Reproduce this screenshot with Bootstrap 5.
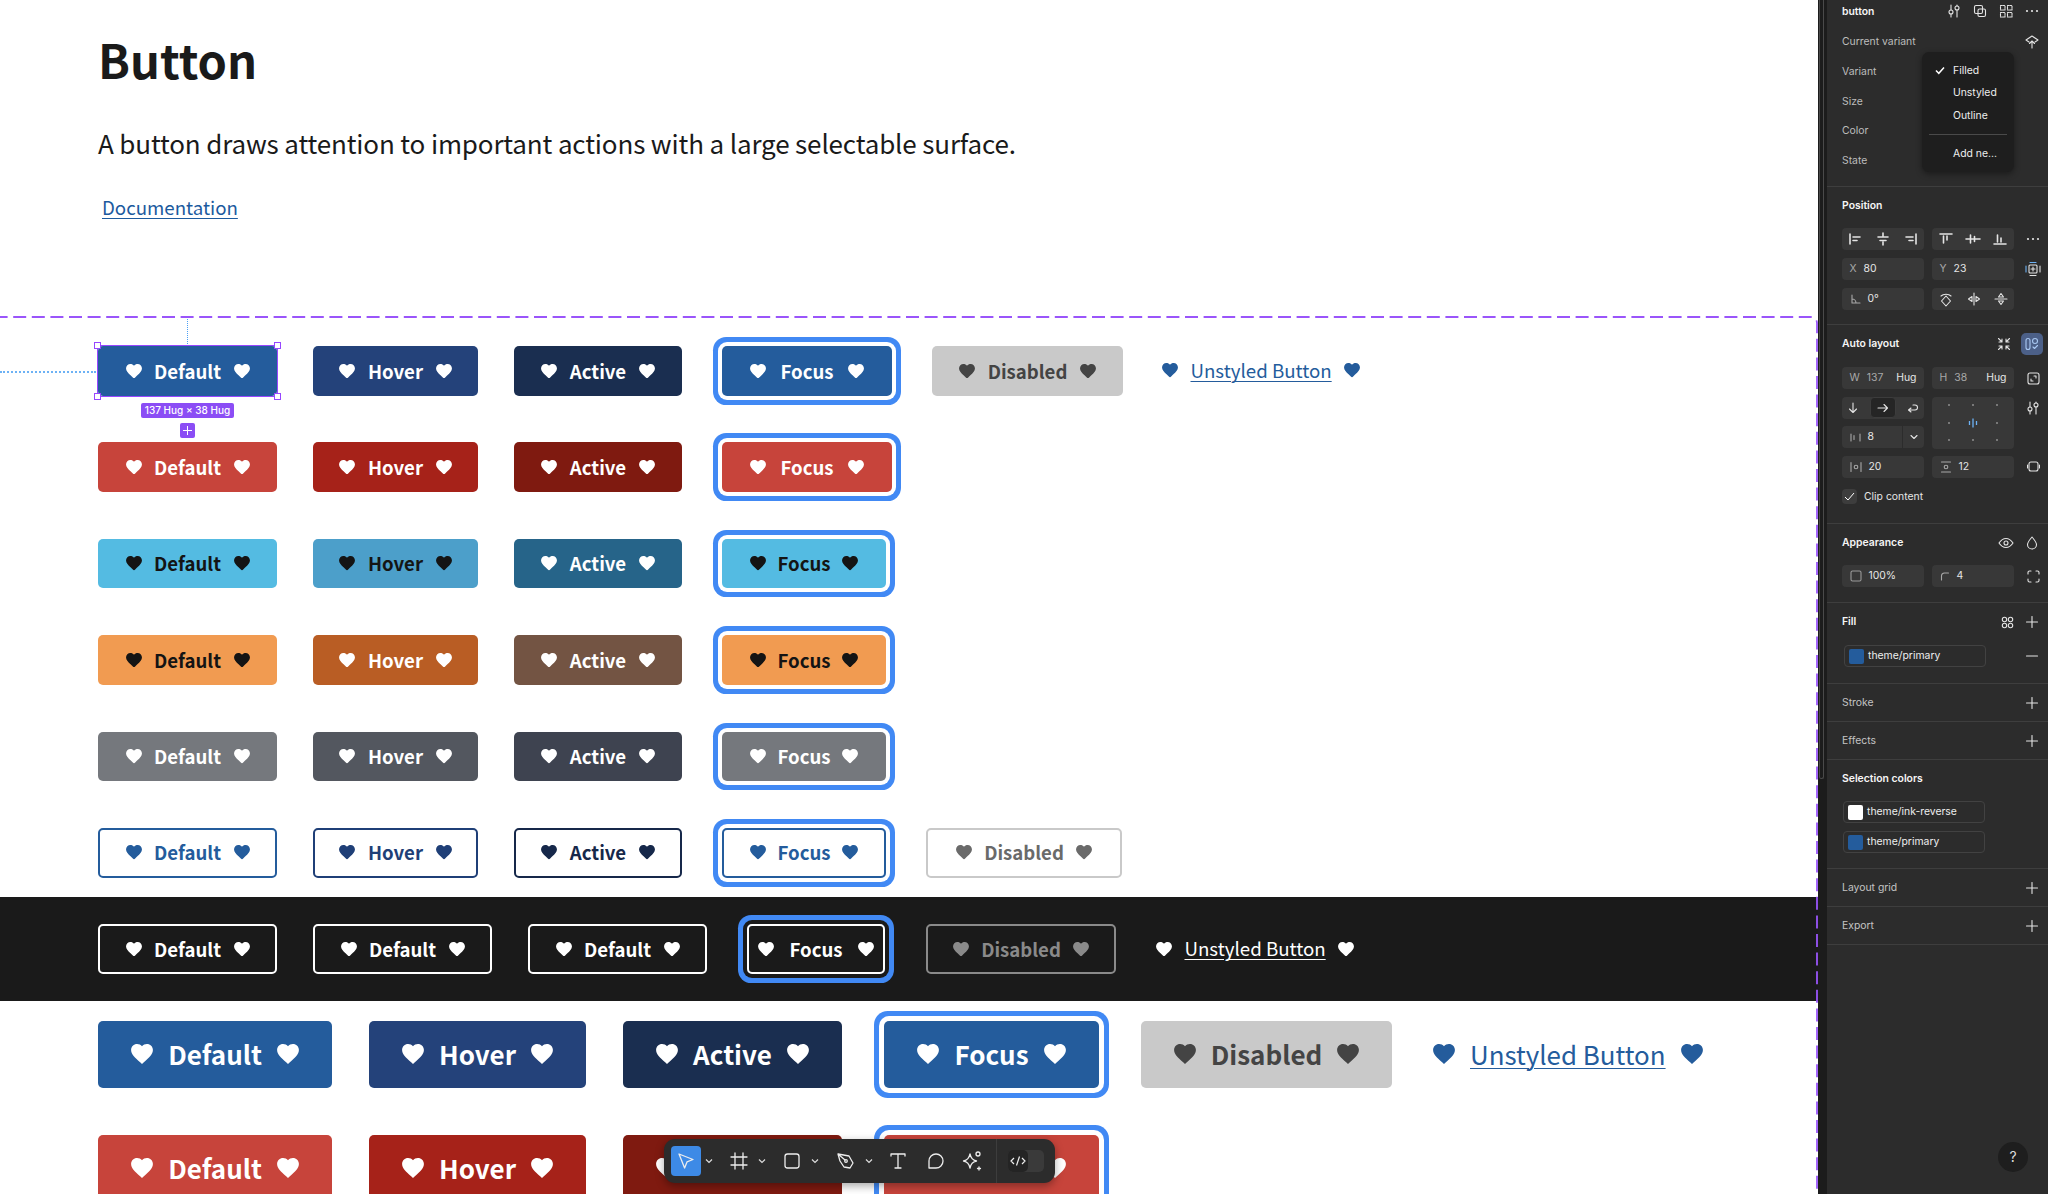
<!doctype html>
<html lang="en">
<head>
<meta charset="utf-8">
<title>Button</title>
<link rel="stylesheet" href="https://cdn.jsdelivr.net/npm/bootstrap@5.3.0/dist/css/bootstrap.min.css">
<style>
:root{--src:"Noto Sans CJK SC","Noto Sans",sans-serif;--ui:Inter,"Liberation Sans",sans-serif;}
html,body{margin:0;height:1195px;overflow:hidden;background:#fff;}
.shell{width:2048px;height:1194px;overflow:hidden;}
.canvas{width:1818px;height:1194px;overflow:hidden;position:relative;background:#fff;font-family:var(--src);color:#1a1a1a;flex:none;}
.intro{height:317px;padding:31px 0 0 98px;}
.pg-title{font:700 47px/56px var(--src);margin:0 0 38px;color:#1a1a1a;}
.pg-lead{font:400 26px/36px var(--src);letter-spacing:-.15px;margin:0 0 31px;color:#1a1a1a;}
.pg-doc{font:400 18.7px/30px var(--src);margin-left:4px;color:#1c5a9e;text-decoration:underline;text-underline-offset:3px;text-decoration-thickness:1px;}
.stage{padding:29px 0 0 98px;}
.bline{display:flex;align-items:center;height:49.6px;margin-bottom:46.8px;}
.btn.hb{--bs-btn-border-width:0;--bs-btn-border-radius:5px;--bs-btn-padding-x:0;--bs-btn-padding-y:0;--bs-btn-font-family:var(--src);--bs-btn-font-size:18.6px;--bs-btn-font-weight:700;--bs-btn-line-height:1;--bs-btn-color:var(--fg);--bs-btn-hover-color:var(--fg);--bs-btn-bg:var(--bg);--bs-btn-hover-bg:var(--bg);display:inline-flex;align-items:center;justify-content:center;gap:12.5px;height:49.6px;flex:none;margin-right:36px;}
.hb svg.hrt{width:16px;height:14.6px;fill:currentColor;flex:none;}
.w1{width:179px}.w2{width:165px}.w3{width:168px}.w4{width:170px}.w4b{width:164px}.w5{width:191px}.w5b{width:196px}
.btn.foc{box-shadow:0 0 0 4px #fff,0 0 0 9px #4189f4;margin-left:4px;margin-right:40px;gap:14px;}
.btn.foc.w4b{gap:11.5px;}
.dk .btn.foc{box-shadow:0 0 0 4px #1a1a1a,0 0 0 9px #4189f4;}
.c-blue{--bg:#245c9c;--fg:#fff}.c-blue2{--bg:#24427a;--fg:#fff}.c-blue3{--bg:#1a2e50;--fg:#fff}
.c-red{--bg:#c7443b;--fg:#fff}.c-red2{--bg:#a62219;--fg:#fff}.c-red3{--bg:#7f1a10;--fg:#fff}
.c-cy{--bg:#54bbe2;--fg:#141414}.c-cy2{--bg:#4c9fca;--fg:#141414}.c-cy3{--bg:#266489;--fg:#fff}
.c-or{--bg:#f19b51;--fg:#141414}.c-or2{--bg:#b95d24;--fg:#fff}.c-or3{--bg:#735443;--fg:#fff}
.c-gr{--bg:#75787d;--fg:#fff}.c-gr2{--bg:#53575f;--fg:#fff}.c-gr3{--bg:#3e4350;--fg:#fff}
.c-dis{--bg:#c9c9c9;--fg:#444}
.btn.ol{--bs-btn-border-width:2.6px;--bs-btn-border-color:var(--fg);--bs-btn-hover-border-color:var(--fg);--bg:transparent;}
.ol1{--fg:#245c9c}.ol2{--fg:#1f3f77}.ol3{--fg:#16284a}.ol4{--fg:#6a6a6a;}
.btn.ol.ol4{--bs-btn-border-color:#c9c9c9;--bs-btn-hover-border-color:#c9c9c9;}
.ol5{--fg:#fff}.ol6{--fg:#8a8a8a;}
.btn.ol.ol6{--bs-btn-border-color:#8a8a8a;--bs-btn-hover-border-color:#8a8a8a;}
.plain{display:inline-flex;align-items:center;gap:12.5px;font:400 18.7px/1 var(--src);}
.plain svg{width:16px;height:14.6px;fill:currentColor;flex:none;}
.plain u{text-underline-offset:3px;text-decoration-thickness:1px;}
.t-blue{color:#245c9c;margin-left:3px}.t-white{color:#fff}
.dk{background:#1a1a1a;height:104px;margin:19px 0 20px -98px;padding:27.5px 0 0 98px;}
.big .btn.hb{--bs-btn-font-size:26px;height:67px;gap:15px;margin-right:37px;border-radius:5px;}
.big .btn.hb svg.hrt{width:22px;height:20px;}
.big .btn.foc{box-shadow:0 0 0 5px #fff,0 0 0 10px #4189f4;margin-left:5px;margin-right:42px;gap:15.5px;}
.big .bline{height:67px;margin-bottom:47px;}
.big .plain{font-size:25.9px;gap:15px;margin-left:4px;}
.big .plain svg{width:22px;height:20px;}
.w6{width:234px}.w7{width:217px}.w8{width:219px}.w9{width:215px}.w10{width:251px}
.sel{position:relative;display:inline-flex;flex:none;margin-right:36px;}
.sel .btn.hb{margin-right:0;}
.sel-box{position:absolute;inset:-1px;border:1.5px solid #9747ff;pointer-events:none;}
.hd{position:absolute;width:7px;height:7px;background:#fff;border:1.5px solid #9747ff;}
.hd1{left:-4px;top:-4px}.hd2{right:-4px;top:-4px}.hd3{left:-4px;bottom:-4px}.hd4{right:-4px;bottom:-4px}
.dot-v{position:absolute;left:89px;top:-29px;height:27px;border-left:1px dotted #4b9ff5;}
.dot-h{position:absolute;right:100%;margin-right:2px;top:50%;width:96px;border-top:2px dotted #6db2f5;}
.sz{position:absolute;left:43px;top:57px;width:93px;height:15px;background:#8b4df5;color:#fff;font:500 10px/15px var(--ui);text-align:center;border-radius:2px;white-space:nowrap;}
.pl{position:absolute;left:82px;top:77px;width:15px;height:15px;background:#8b4df5;border-radius:2px;}
.pl svg{display:block;}
.frame-svg{position:absolute;left:0;top:316px;pointer-events:none;}

.strip{width:9px;background:#1c1c1c;flex:none;padding:0 3px 0 1px;}
.strip div{width:5px;height:779px;border:1px solid #4a4a4a;border-top:0;border-radius:0 0 3px 3px;}
.panel{width:221px;flex:none;background:#2c2c2c;color:#fff;font:400 10.4px/16px var(--ui);position:relative;overflow:hidden;}
.sc{border-bottom:1px solid #3e3e3e;padding:11px 0 0 15px;position:relative;}
.ttl{font-weight:600;color:#f5f5f5;line-height:16px;}
.mut{color:#bdbdbd;}
.g{display:grid;grid-template-columns:82px 82px 1fr;column-gap:8px;row-gap:8px;}
.fld{height:22px;background:#383838;border-radius:4px;display:flex;align-items:center;padding:0 7.5px;color:#e6e6e6;gap:7px;white-space:nowrap;}
.fld i{font-style:normal;color:#a8a8a8;}
.seg{padding:0;gap:0;justify-content:space-around;}
.ico{stroke:#e4e4e4;fill:none;stroke-width:1.1;stroke-linecap:round;stroke-linejoin:round;display:block;flex:none;}
.thick{stroke-width:1.6;}
.ic-slot{display:flex;align-items:center;justify-content:center;height:22px;width:20px;margin-left:1px;}
.pill{width:142px;height:22px;border:1px solid #424242;border-radius:4px;display:flex;align-items:center;gap:4px;padding-left:4px;color:#eee;}
.swt{width:15px;height:15px;border-radius:2px;flex:none;}
.s-row{height:38px;padding:0 10px 0 15px;border-bottom:1px solid #3e3e3e;display:flex;align-items:center;justify-content:space-between;color:#c4c4c4;}
.hdr-ic{display:flex;position:absolute;top:3px;left:119px;gap:10px;}
.drop{position:absolute;left:95px;top:52px;width:92px;height:120px;background:#1e1e1e;border-radius:7px;box-shadow:0 2px 6px rgba(0,0,0,.4);padding:7.5px 0 0 31px;color:#eee;}
.drop div{height:22.5px;line-height:22.5px;}
.drop hr{position:absolute;left:7px;right:7px;top:82px;margin:0;border-top:1px solid #4a4a4a;opacity:1;}
.drop .tick{position:absolute;left:13px;top:14px;}
.lbl{height:29.7px;line-height:29.7px;color:#bdbdbd;}
.help{position:absolute;left:171px;top:1142px;width:30px;height:30px;border-radius:50%;background:#1e1e1e;color:#ddd;font:400 14px/30px var(--ui);text-align:center;}
.tbar{position:absolute;left:664px;top:1139px;width:391px;height:44px;background:#2c2c2c;border-radius:11px;box-shadow:0 3px 8px rgba(0,0,0,.35);display:flex;align-items:center;padding-left:7px;}
.tb{width:30px;height:30px;display:flex;align-items:center;justify-content:center;border-radius:4px;flex:none;}
.tb svg{stroke:#ededed;fill:none;stroke-width:1.3;stroke-linecap:round;stroke-linejoin:round;}
.tb-on{background:#3d8ae6;}
.tch{width:16px;display:flex;justify-content:center;flex:none;}
.tch svg{stroke:#ddd;fill:none;stroke-width:1.2;}
.ml7{margin-left:7px}.ml6{margin-left:6px}.ml8{margin-left:8px}
.tdv{width:1px;height:44px;background:#3d3d3d;margin:0 11px 0 9px;flex:none;}
.tog{width:36px;height:22px;background:#3a3a3a;border-radius:5px;flex:none;}
.tog div{width:20px;height:22px;background:#242424;border-radius:5px;display:flex;align-items:center;justify-content:center;}
.tog svg{stroke:#eee;fill:none;stroke-width:1.2;}
.tdot{width:2px;height:2px;background:#8e8e8e;border-radius:50%;}
.w-dkf{width:138px}.dk .w-dkf.btn.foc{margin-right:41px;gap:15px;}
.w-dkd{width:190px}.dk .w-dkd.btn{margin-right:40px}
</style>
</head>
<body>
<svg width="0" height="0" class="position-absolute"><symbol id="h" viewBox="2 3 20 18.35"><path d="M12 21.35l-1.45-1.32C5.4 15.36 2 12.28 2 8.5 2 5.42 4.42 3 7.5 3c1.74 0 3.41.81 4.5 2.09C13.09 3.81 14.76 3 16.5 3 19.58 3 22 5.42 22 8.5c0 3.78-3.4 6.86-8.55 11.54L12 21.35z"/></symbol></svg>
<div class="shell d-flex">
<main class="canvas">
  <div class="intro">
    <h1 class="pg-title">Button</h1>
    <p class="pg-lead">A button draws attention to important actions with a large selectable surface.</p>
    <a class="pg-doc" href="#">Documentation</a>
  </div>
  <div class="stage">
    <div class="bline">
      <span class="sel">
        <button class="btn hb w1 c-blue"><svg class="hrt"><use href="#h"/></svg>Default<svg class="hrt"><use href="#h"/></svg></button>
        <span class="sel-box"></span><span class="hd hd1"></span><span class="hd hd2"></span><span class="hd hd3"></span><span class="hd hd4"></span>
        <span class="dot-v"></span><span class="dot-h"></span>
        <span class="sz">137 Hug × 38 Hug</span>
        <span class="pl"><svg width="15" height="15" viewBox="0 0 15 15" fill="none" stroke="#fff"><path d="M7.5 3v9M3 7.5h9"/></svg></span>
      </span>
      <button class="btn hb w2 c-blue2"><svg class="hrt"><use href="#h"/></svg>Hover<svg class="hrt"><use href="#h"/></svg></button>
      <button class="btn hb w3 c-blue3"><svg class="hrt"><use href="#h"/></svg>Active<svg class="hrt"><use href="#h"/></svg></button>
      <button class="btn hb w4 foc c-blue"><svg class="hrt"><use href="#h"/></svg>Focus<svg class="hrt"><use href="#h"/></svg></button>
      <button class="btn hb w5 c-dis"><svg class="hrt"><use href="#h"/></svg>Disabled<svg class="hrt"><use href="#h"/></svg></button>
      <span class="plain t-blue"><svg><use href="#h"/></svg><u>Unstyled Button</u><svg><use href="#h"/></svg></span>
    </div>
    <div class="bline">
      <button class="btn hb w1 c-red"><svg class="hrt"><use href="#h"/></svg>Default<svg class="hrt"><use href="#h"/></svg></button>
      <button class="btn hb w2 c-red2"><svg class="hrt"><use href="#h"/></svg>Hover<svg class="hrt"><use href="#h"/></svg></button>
      <button class="btn hb w3 c-red3"><svg class="hrt"><use href="#h"/></svg>Active<svg class="hrt"><use href="#h"/></svg></button>
      <button class="btn hb w4 foc c-red"><svg class="hrt"><use href="#h"/></svg>Focus<svg class="hrt"><use href="#h"/></svg></button>
    </div>
    <div class="bline">
      <button class="btn hb w1 c-cy"><svg class="hrt"><use href="#h"/></svg>Default<svg class="hrt"><use href="#h"/></svg></button>
      <button class="btn hb w2 c-cy2"><svg class="hrt"><use href="#h"/></svg>Hover<svg class="hrt"><use href="#h"/></svg></button>
      <button class="btn hb w3 c-cy3"><svg class="hrt"><use href="#h"/></svg>Active<svg class="hrt"><use href="#h"/></svg></button>
      <button class="btn hb w4b foc c-cy"><svg class="hrt"><use href="#h"/></svg>Focus<svg class="hrt"><use href="#h"/></svg></button>
    </div>
    <div class="bline">
      <button class="btn hb w1 c-or"><svg class="hrt"><use href="#h"/></svg>Default<svg class="hrt"><use href="#h"/></svg></button>
      <button class="btn hb w2 c-or2"><svg class="hrt"><use href="#h"/></svg>Hover<svg class="hrt"><use href="#h"/></svg></button>
      <button class="btn hb w3 c-or3"><svg class="hrt"><use href="#h"/></svg>Active<svg class="hrt"><use href="#h"/></svg></button>
      <button class="btn hb w4b foc c-or"><svg class="hrt"><use href="#h"/></svg>Focus<svg class="hrt"><use href="#h"/></svg></button>
    </div>
    <div class="bline">
      <button class="btn hb w1 c-gr"><svg class="hrt"><use href="#h"/></svg>Default<svg class="hrt"><use href="#h"/></svg></button>
      <button class="btn hb w2 c-gr2"><svg class="hrt"><use href="#h"/></svg>Hover<svg class="hrt"><use href="#h"/></svg></button>
      <button class="btn hb w3 c-gr3"><svg class="hrt"><use href="#h"/></svg>Active<svg class="hrt"><use href="#h"/></svg></button>
      <button class="btn hb w4b foc c-gr"><svg class="hrt"><use href="#h"/></svg>Focus<svg class="hrt"><use href="#h"/></svg></button>
    </div>
    <div class="bline mb-0">
      <button class="btn hb ol w1 ol1"><svg class="hrt"><use href="#h"/></svg>Default<svg class="hrt"><use href="#h"/></svg></button>
      <button class="btn hb ol w2 ol2"><svg class="hrt"><use href="#h"/></svg>Hover<svg class="hrt"><use href="#h"/></svg></button>
      <button class="btn hb ol w3 ol3"><svg class="hrt"><use href="#h"/></svg>Active<svg class="hrt"><use href="#h"/></svg></button>
      <button class="btn hb ol w4b foc ol1"><svg class="hrt"><use href="#h"/></svg>Focus<svg class="hrt"><use href="#h"/></svg></button>
      <button class="btn hb ol w5b ol4"><svg class="hrt"><use href="#h"/></svg>Disabled<svg class="hrt"><use href="#h"/></svg></button>
    </div>
    <div class="dk">
      <div class="bline mb-0">
        <button class="btn hb ol w1 ol5"><svg class="hrt"><use href="#h"/></svg>Default<svg class="hrt"><use href="#h"/></svg></button>
        <button class="btn hb ol w1 ol5"><svg class="hrt"><use href="#h"/></svg>Default<svg class="hrt"><use href="#h"/></svg></button>
        <button class="btn hb ol w1 ol5"><svg class="hrt"><use href="#h"/></svg>Default<svg class="hrt"><use href="#h"/></svg></button>
        <button class="btn hb ol foc ol5 w-dkf"><svg class="hrt"><use href="#h"/></svg>Focus<svg class="hrt"><use href="#h"/></svg></button>
        <button class="btn hb ol ol6 w-dkd"><svg class="hrt"><use href="#h"/></svg>Disabled<svg class="hrt"><use href="#h"/></svg></button>
        <span class="plain t-white"><svg><use href="#h"/></svg><u>Unstyled Button</u><svg><use href="#h"/></svg></span>
      </div>
    </div>
    <div class="big">
      <div class="bline">
        <button class="btn hb w6 c-blue"><svg class="hrt"><use href="#h"/></svg>Default<svg class="hrt"><use href="#h"/></svg></button>
        <button class="btn hb w7 c-blue2"><svg class="hrt"><use href="#h"/></svg>Hover<svg class="hrt"><use href="#h"/></svg></button>
        <button class="btn hb w8 c-blue3"><svg class="hrt"><use href="#h"/></svg>Active<svg class="hrt"><use href="#h"/></svg></button>
        <button class="btn hb w9 foc c-blue"><svg class="hrt"><use href="#h"/></svg>Focus<svg class="hrt"><use href="#h"/></svg></button>
        <button class="btn hb w10 c-dis"><svg class="hrt"><use href="#h"/></svg>Disabled<svg class="hrt"><use href="#h"/></svg></button>
        <span class="plain t-blue"><svg><use href="#h"/></svg><u>Unstyled Button</u><svg><use href="#h"/></svg></span>
      </div>
      <div class="bline">
        <button class="btn hb w6 c-red"><svg class="hrt"><use href="#h"/></svg>Default<svg class="hrt"><use href="#h"/></svg></button>
        <button class="btn hb w7 c-red2"><svg class="hrt"><use href="#h"/></svg>Hover<svg class="hrt"><use href="#h"/></svg></button>
        <button class="btn hb w8 c-red3"><svg class="hrt"><use href="#h"/></svg>Active<svg class="hrt"><use href="#h"/></svg></button>
        <button class="btn hb w9 foc c-red"><svg class="hrt"><use href="#h"/></svg>Focus<svg class="hrt"><use href="#h"/></svg></button>
      </div>
    </div>
  </div>
  <svg class="frame-svg" width="1818" height="880" viewBox="0 0 1818 880"><rect x="-30" y="1" width="1847" height="1000" rx="6" fill="none" stroke="#9a55fa" stroke-width="1.8" stroke-dasharray="13 5.6"/></svg>
  <div class="tbar">
    <div class="tb tb-on"><svg width="20" height="20" viewBox="0 0 20 20"><path d="M3 3l14 5.5-6 2.4-2.4 6.1z"/></svg></div>
    <div class="tch"><svg width="8" height="6" viewBox="0 0 8 6"><path d="M1 1.500l3 3 3-3"/></svg></div>
    <div class="tb ml7"><svg width="20" height="20" viewBox="0 0 20 20"><path d="M6 2v16M14 2v16M2 6h16M2 14h16"/></svg></div>
    <div class="tch"><svg width="8" height="6" viewBox="0 0 8 6"><path d="M1 1.500l3 3 3-3"/></svg></div>
    <div class="tb ml7"><svg width="20" height="20" viewBox="0 0 20 20"><rect x="3" y="3" width="14" height="14" rx="2.500"/></svg></div>
    <div class="tch"><svg width="8" height="6" viewBox="0 0 8 6"><path d="M1 1.500l3 3 3-3"/></svg></div>
    <div class="tb ml8"><svg width="22" height="22" viewBox="0 0 22 22"><path d="M3 4l11 2 4 7-3 5-6-1-4-6zM3 4l7 6"/><circle cx="11" cy="11" r="1.300"/></svg></div>
    <div class="tch"><svg width="8" height="6" viewBox="0 0 8 6"><path d="M1 1.500l3 3 3-3"/></svg></div>
    <div class="tb ml6"><svg width="22" height="22" viewBox="0 0 22 22"><path d="M4 6V4h14v2M11 4v14M8 18h6"/></svg></div>
    <div class="tb ml8"><svg width="20" height="20" viewBox="0 0 20 20"><path d="M10 3a7 7 0 1 1 0 14H3v-7a7 7 0 0 1 7-7z"/></svg></div>
    <div class="tb ml6"><svg width="24" height="24" viewBox="0 0 24 24"><path d="M10 5c1 4.500 2.500 6 6.500 7-4 1-5.500 2.500-6.500 7-1-4.500-2.500-6-6.500-7 4-1 5.500-2.500 6.500-7z"/><circle cx="18" cy="5" r="2"/><path d="M19 18v3M17.500 19.500h3"/></svg></div>
    <div class="tdv"></div>
    <div class="tog"><div><svg width="16" height="12" viewBox="0 0 16 12"><path d="M4 3L1 6l3 3M12 3l3 3-3 3M9.500 1.500l-3 9"/></svg></div></div>
  </div>
</main>
<div class="strip"><div></div></div>
<aside class="panel">
  <section class="sc" style="height:187px;padding-top:4px">
    <div class="ttl">button</div>
    <div class="hdr-ic">
      <svg class="ico" width="16" height="16" viewBox="0 0 16 16"><path d="M5 2v5M5 11v3M11 2v1M11 7v7"/><circle cx="5" cy="9" r="2"/><circle cx="11" cy="5" r="2"/></svg>
      <svg class="ico" width="16" height="16" viewBox="0 0 16 16"><rect x="2.500" y="2.500" width="8" height="8" rx="1.500"/><rect x="6" y="6" width="7.500" height="7.500" rx="1.500"/></svg>
      <svg class="ico" width="16" height="16" viewBox="0 0 16 16" stroke-dasharray="1.500 1"><rect x="2.500" y="2.500" width="4.500" height="4.500"/><rect x="9.500" y="2.500" width="4.500" height="4.500"/><rect x="2.500" y="9.500" width="4.500" height="4.500"/><rect x="9.500" y="9.500" width="4.500" height="4.500"/></svg>
      <svg width="16" height="16" viewBox="0 0 16 16" fill="#e4e4e4"><circle cx="3" cy="8" r="1.100"/><circle cx="8" cy="8" r="1.100"/><circle cx="13" cy="8" r="1.100"/></svg>
    </div>
    <div class="d-flex justify-content-between mut" style="margin-top:14px;padding-right:9px;height:16px"><span>Current variant</span><svg class="ico" width="14" height="16" viewBox="0 0 14 16"><path d="M1 6l6-4 6 4-3 2M4 8l-3-2M7 14V7M4.500 9.500L7 7l2.500 2.500"/></svg></div>
    <div style="margin-top:7px">
      <div class="lbl">Variant</div><div class="lbl">Size</div><div class="lbl">Color</div><div class="lbl">State</div>
    </div>
    <div class="drop">
      <svg class="tick" width="10" height="9" viewBox="0 0 10 9" fill="none" stroke="#fff" stroke-width="1.500"><path d="M1 4.500l2.800 2.800L9 1.500"/></svg>
      <div>Filled</div><div>Unstyled</div><div>Outline</div><hr><div style="margin-top:16px">Add ne...</div>
    </div>
  </section>
  <section class="sc" style="height:138px">
    <div class="ttl" style="margin-bottom:14px">Position</div>
    <div class="g">
      <div class="fld seg"><svg class="ico thick" width="16" height="14" viewBox="0 0 16 14"><path d="M2 2v10M5 5h7M5 8.500h4"/></svg><svg class="ico thick" width="16" height="14" viewBox="0 0 16 14"><path d="M8 1v3M8 10v3M3 5h10M5 8.500h6"/></svg><svg class="ico thick" width="16" height="14" viewBox="0 0 16 14"><path d="M14 2v10M4 5h7M7 8.500h4"/></svg></div>
      <div class="fld seg"><svg class="ico thick" width="16" height="14" viewBox="0 0 16 14"><path d="M2 2h12M5.500 4v7M9 4v4"/></svg><svg class="ico thick" width="16" height="14" viewBox="0 0 16 14"><path d="M1 7h14M5.500 3v8M9.500 4.500v5"/></svg><svg class="ico thick" width="16" height="14" viewBox="0 0 16 14"><path d="M2 12h12M5.500 3v7M9 6v4"/></svg></div>
      <div class="ic-slot"><svg width="16" height="16" viewBox="0 0 16 16" fill="#e4e4e4"><circle cx="3" cy="8" r="1.100"/><circle cx="8" cy="8" r="1.100"/><circle cx="13" cy="8" r="1.100"/></svg></div>
      <div class="fld"><i>X</i>80</div>
      <div class="fld"><i>Y</i>23</div>
      <div class="ic-slot"><svg class="ico" width="16" height="16" viewBox="0 0 16 16"><path d="M1 5v6" style="stroke:#6db2f5"/><path d="M5 1.500h6" style="stroke:#6db2f5"/><rect x="4" y="4" width="8" height="8" rx="1"/><path d="M8 6v4M6 8h4M5 14.500h6M15 5v6"/></svg></div>
      <div class="fld"><svg class="ico" width="11" height="11" viewBox="0 0 11 11" style="stroke:#a8a8a8"><path d="M2 1v8h8M2 5a4 4 0 0 1 4 4"/></svg>0°</div>
      <div class="fld seg"><svg class="ico" width="16" height="16" viewBox="0 0 16 16"><path d="M3 5a6 4 0 0 1 10 0M8 5l4.500 5L8 15l-4.500-5z"/></svg><svg class="ico" width="14" height="14" viewBox="0 0 14 14"><path d="M7 1v12M5 4.500v5L1.500 7zM9 4.500v5L12.500 7z"/></svg><svg class="ico" width="14" height="14" viewBox="0 0 14 14"><path d="M1 7h12M4.500 5h5L7 1.500zM4.500 9h5L7 12.500z"/></svg></div>
    </div>
  </section>
  <section class="sc" style="height:199px">
    <div class="d-flex justify-content-between align-items-center" style="height:16px;margin-bottom:15px;padding-right:5px">
      <span class="ttl">Auto layout</span>
      <span class="d-flex align-items-center" style="gap:10px">
        <svg class="ico" width="14" height="14" viewBox="0 0 14 14"><path d="M1.500 1.500L5 5M5 2v3H2M12.500 1.500L9 5M9 2v3h3M1.500 12.500L5 9M5 12V9H2M12.500 12.500L9 9M9 12V9h3"/></svg>
        <span class="d-flex align-items-center justify-content-center" style="width:22px;height:22px;background:#4c6088;border-radius:5px"><svg class="ico" width="16" height="14" viewBox="0 0 16 14" style="stroke:#a9c8f2"><rect x="2" y="1.500" width="4" height="11" rx="2"/><circle cx="11" cy="4" r="2.500"/><path d="M9 10l1.500 1.500L13.500 8.500"/></svg></span>
      </span>
    </div>
    <div class="g" style="grid-template-rows:22px 22px 22px 22px;row-gap:7.5px">
      <div class="fld" style="justify-content:space-between"><span class="d-flex" style="gap:7px"><i>W</i><i>137</i></span><span>Hug</span></div>
      <div class="fld" style="justify-content:space-between"><span class="d-flex" style="gap:7px"><i>H</i><i>38</i></span><span>Hug</span></div>
      <div class="ic-slot"><svg class="ico" width="13" height="13" viewBox="0 0 13 13"><rect x="1" y="1" width="11" height="11" rx="2"/><path d="M7 4h2v2M6 9H4V7"/></svg></div>
      <div class="fld seg"><svg class="ico" width="12" height="12" viewBox="0 0 12 12"><path d="M6 1v9M2.500 7L6 10.500 9.500 7"/></svg><span class="d-flex align-items-center justify-content-center" style="width:26px;height:21px;background:#252525;border-radius:4px;border:1px solid #3c3c3c"><svg class="ico" width="12" height="12" viewBox="0 0 12 12"><path d="M1 6h9M7 2.500L10.500 6 7 9.500"/></svg></span><svg class="ico" width="12" height="12" viewBox="0 0 12 12"><path d="M4 10L1.500 8 4 6M1.500 8H8a2.500 2.500 0 0 0 0-5H6"/></svg></div>
      <div class="fld align-self-start" style="height:52px;grid-row:span 2;background:#383838;display:grid;grid-template-columns:repeat(3,1fr);grid-template-rows:repeat(3,1fr);justify-items:center;align-items:center;padding:4px 8px"><span class="tdot"></span><span class="tdot"></span><span class="tdot"></span><span class="tdot"></span><svg width="12" height="12" viewBox="0 0 12 12" stroke="#6db2f5" stroke-width="1.300"><path d="M2.500 4v4M6 1.500v9M9.500 4v4"/></svg><span class="tdot"></span><span class="tdot"></span><span class="tdot"></span><span class="tdot"></span></div>
      <div class="ic-slot"><svg class="ico" width="16" height="16" viewBox="0 0 16 16"><path d="M5 2v5M5 11v3M11 2v1M11 7v7"/><circle cx="5" cy="9" r="2"/><circle cx="11" cy="5" r="2"/></svg></div>
      <div class="fld" style="padding-right:0;gap:7px"><svg class="ico" width="11" height="11" viewBox="0 0 11 11" style="stroke:#a8a8a8"><path d="M1 2v7M10 2v7M4 3.500v4"/></svg>8<span class="ms-auto d-flex align-items-center justify-content-center" style="width:22px;height:22px;border-left:1px solid #2c2c2c"><svg class="ico" width="8" height="6" viewBox="0 0 8 6"><path d="M1 1.500l3 3 3-3"/></svg></span></div>
      <div></div>
      <div class="fld"><svg class="ico" width="12" height="12" viewBox="0 0 12 12" style="stroke:#a8a8a8"><path d="M1 1.500v9M11 1.500v9"/><circle cx="6" cy="6" r="1.800"/></svg>20</div>
      <div class="fld"><svg class="ico" width="12" height="12" viewBox="0 0 12 12" style="stroke:#a8a8a8"><path d="M1.500 1h9M1.500 11h9"/><circle cx="6" cy="6" r="1.800"/></svg>12</div>
      <div class="ic-slot"><svg class="ico" width="13" height="13" viewBox="0 0 13 13"><rect x="2" y="2" width="9" height="9" rx="2"/><path d="M0.500 5v3M12.500 5v3"/></svg></div>
    </div>
    <div class="d-flex align-items-center" style="margin-top:8px;gap:7px;height:22px;color:#e6e6e6">
      <span class="d-flex align-items-center justify-content-center" style="width:15px;height:15px;background:#3d3d3d;border-radius:4px"><svg width="11" height="10" viewBox="0 0 11 10" fill="none" stroke="#fff"><path d="M1 5l3 3 6-7"/></svg></span>Clip content
    </div>
  </section>
  <section class="sc" style="height:79px">
    <div class="d-flex justify-content-between align-items-center" style="height:16px;margin-bottom:14px;padding-right:10px">
      <span class="ttl">Appearance</span>
      <span class="d-flex align-items-center" style="gap:12px">
        <svg class="ico" width="16" height="12" viewBox="0 0 16 12"><path d="M1 6c2-3 4.500-4.500 7-4.500S13 3 15 6c-2 3-4.500 4.500-7 4.500S3 9 1 6z"/><circle cx="8" cy="6" r="2"/></svg>
        <svg class="ico" width="12" height="14" viewBox="0 0 12 14"><path d="M6 1c3 3.500 4.500 5.500 4.500 7.500a4.500 4.500 0 0 1-9 0C1.500 6.500 3 4.500 6 1z"/></svg>
      </span>
    </div>
    <div class="g">
      <div class="fld"><svg class="ico" width="12" height="12" viewBox="0 0 12 12"><rect x="1" y="1" width="10" height="10" rx="1.500" style="stroke:#9a9a9a"/></svg><span>100%</span></div>
      <div class="fld"><svg class="ico" width="10" height="10" viewBox="0 0 10 10" style="stroke:#a8a8a8"><path d="M1.500 9V5a3 3 0 0 1 3-3h4"/></svg>4</div>
      <div class="ic-slot"><svg class="ico" width="13" height="13" viewBox="0 0 13 13"><path d="M1 4V2.500A1.500 1.500 0 0 1 2.500 1H4M9 1h1.500A1.500 1.500 0 0 1 12 2.500V4M12 9v1.500a1.500 1.500 0 0 1-1.500 1.500H9M4 12H2.500A1.500 1.500 0 0 1 1 10.500V9"/></svg></div>
    </div>
  </section>
  <section class="sc" style="height:81px">
    <div class="d-flex justify-content-between align-items-center" style="height:16px;margin-bottom:15px;padding-right:10px">
      <span class="ttl">Fill</span>
      <span class="d-flex align-items-center" style="gap:12px">
        <svg class="ico" width="13" height="13" viewBox="0 0 13 13"><circle cx="3.500" cy="3.500" r="2.200"/><circle cx="9.500" cy="3.500" r="2.200"/><circle cx="3.500" cy="9.500" r="2.200"/><circle cx="9.500" cy="9.500" r="2.200"/></svg>
        <svg class="ico" width="12" height="12" viewBox="0 0 12 12"><path d="M6 .5v11M.5 6h11"/></svg>
      </span>
    </div>
    <div class="d-flex align-items-center justify-content-between" style="padding-right:10px;margin-left:2px">
      <div class="pill"><span class="swt" style="background:#245c9c"></span>theme/primary</div>
      <svg class="ico" width="12" height="2" viewBox="0 0 12 2"><path d="M.5 1h11"/></svg>
    </div>
  </section>
  <div class="s-row"><span>Stroke</span><svg class="ico" width="12" height="12" viewBox="0 0 12 12"><path d="M6 .5v11M.5 6h11"/></svg></div>
  <div class="s-row"><span>Effects</span><svg class="ico" width="12" height="12" viewBox="0 0 12 12"><path d="M6 .5v11M.5 6h11"/></svg></div>
  <section class="sc" style="height:109px">
    <div class="ttl" style="margin-bottom:14px">Selection colors</div>
    <div class="pill" style="margin-left:1px;margin-bottom:8px"><span class="swt" style="background:#fff"></span>theme/ink-reverse</div>
    <div class="pill" style="margin-left:1px"><span class="swt" style="background:#245c9c"></span>theme/primary</div>
  </section>
  <div class="s-row"><span>Layout grid</span><svg class="ico" width="12" height="12" viewBox="0 0 12 12"><path d="M6 .5v11M.5 6h11"/></svg></div>
  <div class="s-row"><span>Export</span><svg class="ico" width="12" height="12" viewBox="0 0 12 12"><path d="M6 .5v11M.5 6h11"/></svg></div>
  <div class="help">?</div>
</aside>
</div>
</body>
</html>
